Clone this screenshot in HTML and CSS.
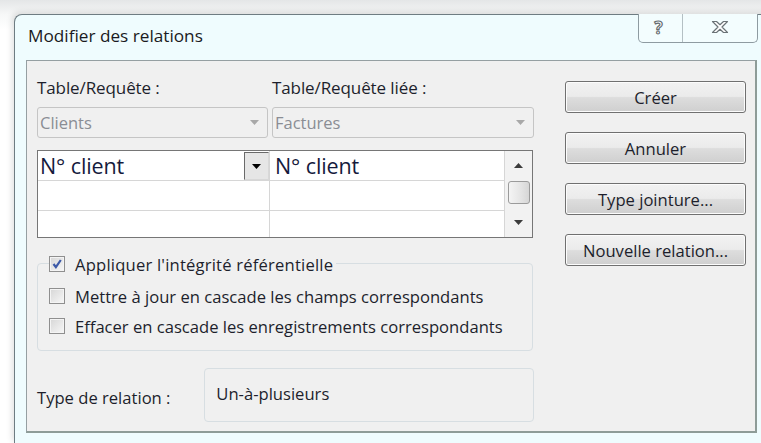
FILE: index.html
```html
<!DOCTYPE html>
<html lang="fr">
<head>
<meta charset="utf-8">
<title>Modifier des relations</title>
<link rel="stylesheet" href="styles.css">
</head>
<body>
<div class="window">
  <div class="titlebar">
    <div class="title">Modifier des relations</div>
    <div class="caption-buttons">
      <div class="cap-btn cap-help">?</div>
      <div class="cap-btn cap-close">
        <svg width="20" height="14" viewBox="0 0 20 14">
          <path d="M2.5 1.5h4l3.5 3.2 3.5-3.2h4l-5.5 5.5 5.5 5.5h-4l-3.5-3.2-3.5 3.2h-4l5.5-5.5z" fill="#fff" stroke="#6b7377" stroke-width="1.2" stroke-linejoin="round"/>
        </svg>
      </div>
    </div>
  </div>

  <div class="panel">
    <div class="left">
      <div class="tables">
        <div class="table-col narrow">
          <div class="label">Table/Requête :</div>
          <div class="combo">
            <span>Clients</span>
            <svg class="combo-arrow" width="9" height="5" viewBox="0 0 9 5"><path d="M0 0h9L4.5 5z" fill="#a8a8a8"/></svg>
          </div>
        </div>
        <div class="table-col wide">
          <div class="label">Table/Requête liée :</div>
          <div class="combo">
            <span>Factures</span>
            <svg class="combo-arrow" width="9" height="5" viewBox="0 0 9 5"><path d="M0 0h9L4.5 5z" fill="#a8a8a8"/></svg>
          </div>
        </div>
      </div>

      <div class="fields">
        <div class="rows">
          <div class="row">
            <div class="cell c1">
              <span>N° client</span>
              <div class="cell-drop">
                <svg width="9" height="5" viewBox="0 0 9 5"><path d="M0 0h9L4.5 5z" fill="#000"/></svg>
              </div>
            </div>
            <div class="cell c2"><span>N° client</span></div>
          </div>
          <div class="row">
            <div class="cell c1"></div>
            <div class="cell c2"></div>
          </div>
          <div class="row last">
            <div class="cell c1"></div>
            <div class="cell c2"></div>
          </div>
        </div>
        <div class="scrollbar">
          <svg class="sb-arrow" width="9" height="5" viewBox="0 0 9 5"><path d="M0 5h9L4.5 0z" fill="#3c3c3c"/></svg>
          <div class="sb-thumb"></div>
          <svg class="sb-arrow" width="9" height="5" viewBox="0 0 9 5"><path d="M0 0h9L4.5 5z" fill="#3c3c3c"/></svg>
        </div>
      </div>

      <div class="integrity">
        <div class="legend check-line">
          <span class="checkbox checked">
            <svg width="12" height="12" viewBox="0 0 12 12"><path d="M2.5 6l2.4 3.2L9.8 2" fill="none" stroke="#3d5aa8" stroke-width="2.2"/></svg>
          </span>
          <span>Appliquer l'intégrité référentielle</span>
        </div>
        <div class="check-line">
          <span class="checkbox"></span>
          <span>Mettre à jour en cascade les champs correspondants</span>
        </div>
        <div class="check-line">
          <span class="checkbox"></span>
          <span>Effacer en cascade les enregistrements correspondants</span>
        </div>
      </div>

      <div class="relation">
        <div class="rel-label">Type de relation :</div>
        <div class="rel-box">Un-à-plusieurs</div>
      </div>
    </div>

    <div class="actions">
      <button class="btn">Créer</button>
      <button class="btn">Annuler</button>
      <button class="btn">Type jointure...</button>
      <button class="btn">Nouvelle relation...</button>
    </div>
  </div>
</div>
</body>
</html>
```

FILE: styles.css
```css
html, body {
  margin: 0;
  padding: 0;
  width: 761px;
  height: 443px;
  overflow: hidden;
  background: linear-gradient(to bottom, #e4e6e7 0px, #f6f7f7 14px, #ffffff 30px);
  font-family: "Open Sans", "Noto Sans", sans-serif;
  color: #1d1f2c;
}

.window {
  margin: 14px 0 0 14px;
  width: 770px;
  height: 429px;
  box-sizing: border-box;
  background: #effcfe;
  border: 1px solid #6e7c82;
  border-right: none;
  border-bottom: none;
  border-radius: 8px 0 0 0;
  box-shadow: -2px -2px 6px rgba(0, 0, 0, 0.12);
}

/* title bar */
.titlebar {
  display: flex;
  justify-content: space-between;
  align-items: flex-start;
  height: 45px;
  width: 743px;
}

.title {
  font-size: 17.2px;
  padding: 9px 0 0 13px;
  color: #1a1a22;
}

.caption-buttons {
  display: flex;
  margin-top: -1px;
  border: 1px solid #8e9ba1;
  border-top: none;
  border-radius: 0 0 5px 5px;
  background: #f3fdfe;
  height: 28px;
}

.cap-btn {
  display: flex;
  align-items: center;
  justify-content: center;
}

.cap-help {
  width: 44px;
  border-right: 1px solid #b4c0c4;
  font-size: 17px;
  font-weight: bold;
  color: #fff;
  -webkit-text-stroke: 1.2px #666d70;
  line-height: 1;
  padding: 0 4px 2px 0;
  box-sizing: border-box;
}

.cap-close {
  width: 74px;
  padding-bottom: 2px;
}

/* client area */
.panel {
  margin-left: 11px;
  width: 731px;
  height: 373px;
  box-sizing: border-box;
  background: #f0f0f0;
  border: 1px solid #959fa2;
  border-right: 2px solid #8e9c98;
  border-bottom: 2px solid #8e9c98;
  display: grid;
  grid-template-columns: 497px 181px;
  column-gap: 31px;
  padding: 0 0 0 10px;
}

.left {
  display: flex;
  flex-direction: column;
}

.tables {
  display: flex;
  gap: 4px;
  padding-top: 16px;
}

.table-col.narrow { width: 231px; }
.table-col.wide { width: 262px; }

.label {
  font-size: 17px;
  height: 22px;
  line-height: 22px;
  margin-bottom: 8px;
  letter-spacing: -0.1px;
}

.combo {
  height: 31px;
  box-sizing: border-box;
  border: 1px solid #c5c5c5;
  border-radius: 3px;
  background: #f0f0f0;
  display: flex;
  align-items: center;
  justify-content: space-between;
  padding: 0 8px 0 2px;
  font-size: 16.5px;
  color: #8a8d94;
}

/* field grid */
.fields {
  margin-top: 12px;
  width: 496px;
  height: 88px;
  box-sizing: border-box;
  border: 1px solid #767676;
  background: #fff;
  display: flex;
}

.rows {
  flex: 1;
  display: flex;
  flex-direction: column;
}

.row {
  display: flex;
  height: 29px;
  border-bottom: 1px solid #d6d6d6;
}

.row.last {
  border-bottom: none;
  flex: 1;
}

.cell {
  display: flex;
  align-items: center;
  justify-content: space-between;
  font-size: 21.5px;
  color: #151a3c;
}

.cell span {
  letter-spacing: -0.1px;
}

.cell.c1 {
  width: 232px;
  border-right: 1px solid #d6d6d6;
  padding-left: 2px;
  box-sizing: border-box;
}

.cell.c2 {
  flex: 1;
  padding-left: 5px;
}

.cell-drop {
  width: 25px;
  height: 28px;
  box-sizing: border-box;
  border: 1px solid #6a6a6a;
  border-right-color: #d8d8d8;
  border-bottom-color: #d8d8d8;
  background: #e6e6e6;
  display: flex;
  align-items: center;
  justify-content: center;
  margin-top: 1px;
}

.scrollbar {
  width: 28px;
  border-left: 1px solid #d6d6d6;
  background: #f2f2f2;
  display: flex;
  flex-direction: column;
  align-items: center;
  justify-content: space-between;
  padding: 12px 0 12px;
  box-sizing: border-box;
}

.sb-thumb {
  width: 22px;
  height: 23px;
  margin-top: -3px;
  box-sizing: border-box;
  border: 1px solid #9b9b9b;
  border-radius: 3px;
  background: linear-gradient(to right, #f4f4f4, #e4e4e4 60%, #d6d6d6);
}

/* referential integrity group */
.integrity {
  margin-top: 25px;
  width: 496px;
  height: 88px;
  box-sizing: border-box;
  border: 1px solid #d7dee2;
  border-radius: 4px;
  padding: 0 0 0 11px;
  display: flex;
  flex-direction: column;
}

.check-line {
  display: flex;
  align-items: center;
  gap: 10px;
  font-size: 16.6px;
  height: 30px;
}

.legend {
  margin-top: -13px;
  align-self: flex-start;
  background: #f0f0f0;
  padding: 0 3px 0 0;
  height: 26px;
  margin-bottom: 4px;
  letter-spacing: 0.2px;
}

.checkbox {
  width: 16px;
  height: 16px;
  flex: none;
  box-sizing: border-box;
  border: 1px solid #8f8f8f;
  background: linear-gradient(135deg, #d6d6d6, #f7f7f7);
  box-shadow: inset 0 0 0 1px #f4f4f4;
  display: flex;
  align-items: center;
  justify-content: center;
}

.checkbox svg { display: block; }

/* relation type */
.relation {
  display: flex;
  align-items: center;
  margin-top: 17px;
}

.rel-label {
  font-size: 16.6px;
  width: 168px;
  padding-top: 4px;
}

.rel-box {
  width: 331px;
  height: 54px;
  box-sizing: border-box;
  border: 1px solid #d7dee2;
  border-radius: 4px;
  font-size: 16.6px;
  padding: 13px 0 0 11px;
}

/* command buttons */
.actions {
  display: flex;
  flex-direction: column;
  padding-top: 20px;
  gap: 19px;
}

.btn {
  height: 32px;
  width: 181px;
  border: 1px solid #707070;
  border-radius: 3px;
  background: linear-gradient(to bottom, #f2f2f2 0%, #ebebeb 48%, #dddddd 52%, #cfcfcf 100%);
  box-shadow: inset 0 0 0 1px #fcfcfc;
  font-family: "Open Sans", "Noto Sans", sans-serif;
  font-size: 16.6px;
  color: #1d1f2c;
  padding: 0;
}
```
